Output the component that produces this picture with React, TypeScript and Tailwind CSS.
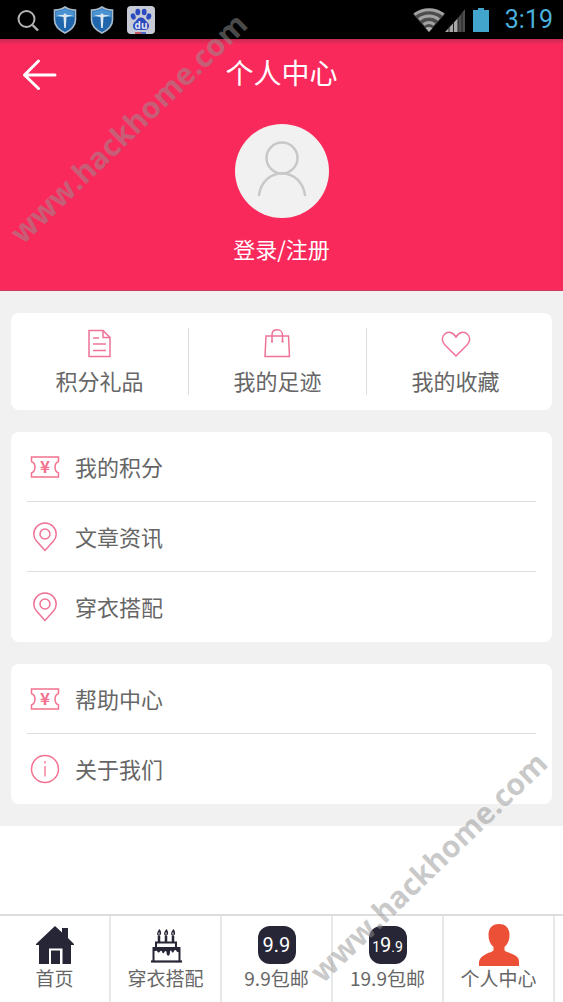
import type { ReactNode } from "react";

function SearchIcon() {
  return (
    <svg className="h-6 w-6" viewBox="0 0 24 24" fill="none" stroke="#b4b4b4" strokeWidth="2">
      <circle cx="10.5" cy="11" r="8" />
      <path d="M16.5 17l5.5 5.5" strokeWidth="2.4" />
    </svg>
  );
}

function ShieldIcon() {
  return (
    <svg className="h-7 w-6" viewBox="0 0 24 28">
      <path d="M12 1c3 2.2 6.500 3 10.500 3v10c0 6-4.500 10-10.500 13C6 24 1.500 20 1.500 14V4C5.500 4 9 3.200 12 1z" fill="#1f66ad" stroke="#a9bccb" strokeWidth="1.600" />
      <path d="M12 2.800C9.500 4.400 6 5.300 3 5.400V11h18V5.400c-3-.1-6.500-1-9-2.600z" fill="#4a93d2" />
      <path d="M4 9.500c2.500-.4 5-.6 6.500-.8L12 7l1.500 1.700c1.500.2 4 .4 6.500.8l-6.500 1.500L12.800 22h-1.600L10.500 11z" fill="#dbe6ee" />
    </svg>
  );
}

function PawIcon() {
  return (
    <svg className="h-7 w-7" viewBox="0 0 28 28">
      <rect width="28" height="28" rx="4" fill="#c6cbd6" />
      <g fill="#2c49c0">
        <ellipse cx="6.200" cy="10.500" rx="2.400" ry="3.200" transform="rotate(-18 6.200 10.500)" />
        <ellipse cx="10.800" cy="6" rx="2.400" ry="3.300" />
        <ellipse cx="17.200" cy="6" rx="2.400" ry="3.300" />
        <ellipse cx="21.800" cy="10.500" rx="2.400" ry="3.200" transform="rotate(18 21.800 10.500)" />
        <path d="M14 11.500c3 0 4 2.500 5.500 4s3 2.500 2.500 5-2 3.500-4 3.500H10c-2 0-3.700-1-4-3.500s1-3.500 2.500-5 2.500-4 5.500-4z" />
      </g>
      <path d="M8 27h6" stroke="#c2353c" strokeWidth="1.500" />
      <path d="M14 27h5" stroke="#2c49c0" strokeWidth="1.500" />
      <text x="14" y="22.500" textAnchor="middle" fontFamily="Open Sans, sans-serif" fontWeight="700" fontSize="10" fill="#e3e6ef">
        du
      </text>
    </svg>
  );
}

function WifiIcon() {
  return (
    <svg className="h-6 w-8" viewBox="0 0 32 24">
      <path d="M0 6C9-1 23-1 32 6L16 24z" fill="#4c4c4c" />
      <g fill="none" stroke="#a2a2a2" strokeWidth="3">
        <path d="M1.500 6.500C10 0 22 0 30.500 6.500" />
        <path d="M6 11.500c6-4.600 14-4.600 20 0" />
        <path d="M10.500 16.500c3.500-2.600 7.500-2.600 11 0" />
      </g>
      <path d="M12.500 20c2-1.500 5-1.500 7 0L16 24z" fill="#b0b0b0" />
    </svg>
  );
}

function SignalIcon() {
  return (
    <svg className="h-6 w-5" viewBox="0 0 20 24">
      <path d="M0 24L13 10v14z" fill="#a6a6a6" />
      <path d="M13 10l7-9v23h-7z" fill="#4d4d4d" />
      <path d="M4 18v6M8.500 14v10M13 9v15M17 4v20" stroke="#222" strokeWidth="1" />
    </svg>
  );
}

function BatteryIcon() {
  return (
    <svg className="h-6 w-4" viewBox="0 0 16 24">
      <path d="M5 0h6v2h5v22H0V2h5z" fill="#42a5cc" />
    </svg>
  );
}

function DocumentIcon() {
  return (
    <svg className="h-[30px] w-[30px]" viewBox="0 0 30 30" fill="none" stroke="#ee7396" strokeWidth="1.500">
      <path d="M4 2.500h14l7 7v19H4z" />
      <path d="M18 2.500v7h7M8 10h6M8 16h13M8 22.500h13" />
    </svg>
  );
}

function BagIcon() {
  return (
    <svg className="h-[30px] w-[30px]" viewBox="0 0 30 30" fill="none" stroke="#ee7396" strokeWidth="1.500">
      <path d="M3 8h22.500l1 20.500H2z" />
      <path d="M9 13.500V7c0-3 2-5.200 5.200-5.200S19.500 4 19.500 7v6.500" />
      <path d="M8 13.500h2M18.500 13.500h2" strokeWidth="2" />
    </svg>
  );
}

function HeartIcon() {
  return (
    <svg className="h-[30px] w-[30px]" viewBox="0 0 30 30" fill="none" stroke="#ee7396" strokeWidth="1.500">
      <path d="M15 28L4 17C.5 13.500.5 9 3.500 6.200 7 3 12 4 15 9c3-5 8-6 11.500-2.800 3 2.800 3 7.300-.5 10.800z" />
    </svg>
  );
}

function TicketIcon() {
  return (
    <svg className="h-[30px] w-[30px]" viewBox="0 0 30 30" fill="none" stroke="#f4718f" strokeWidth="1.500">
      <path d="M1.500 5h27v4.500c-2.500 1-3.500 3.300-3.500 5.700s1 4.700 3.500 5.700V25h-27v-4.100c2.500-1 3.500-3.300 3.500-5.700s-1-4.700-3.500-5.700z" />
      <text x="15" y="21" textAnchor="middle" fontFamily="Noto Sans CJK SC, sans-serif" fontWeight="700" fontSize="17" fill="#f4718f" stroke="none">
        ¥
      </text>
    </svg>
  );
}

function PinIcon() {
  return (
    <svg className="h-[30px] w-[30px]" viewBox="0 0 30 30" fill="none" stroke="#ee7396" strokeWidth="1.500">
      <path d="M15 28.500L6.500 19C4.800 17 3.800 14.800 3.800 12.200a11.200 11.200 0 0122.400 0c0 2.600-1 4.800-2.700 6.800z" />
      <circle cx="15" cy="12" r="5" />
    </svg>
  );
}

function InfoIcon() {
  return (
    <svg className="h-[30px] w-[30px]" viewBox="0 0 30 30" fill="none" stroke="#f4718f" strokeWidth="1.500">
      <circle cx="15" cy="15" r="13.500" />
      <path d="M15 12v10.500M15 7v2.500" strokeWidth="1.300" />
    </svg>
  );
}

function HomeIcon() {
  return (
    <svg className="h-10 w-10" viewBox="0 0 40 40" fill="#272636">
      <path d="M20 1l7 6.500V3h6v10l6 6v1h-3v19h-8.500V23.500H14V39H4V20H1v-1z" />
      <path d="M16 39V25.500h9V39z" />
    </svg>
  );
}

function CakeIcon() {
  return (
    <svg className="h-10 w-10" viewBox="0 0 40 40" fill="none" stroke="#272636" strokeWidth="2">
      <path d="M13 11v6M20 11v6M27 11v6" strokeWidth="2.500" />
      <path d="M10 23v-5.500h20V23" />
      <path d="M7.500 36V23h26v13" />
      <path d="M5 36.500h31" strokeWidth="2.200" />
      <path d="M7.500 23h26v3c-1 2-2.500 1-3 0-.8-1.500-2-1-2.500 0-.5 2-2 2-2.500 0-.5-1-1.500-.5-1.500 1 0 5-3.500 5-3.500 0-.5-1.500-1.500-1.500-2 0-1 2-2 1.500-2.500-.5-.5-1-1.500-1-2 0-1 2-2 1-3-.5-1-1-2.500 1-3.500-.5z" fill="#272636" stroke="none" />
      <g fill="#272636" stroke="none">
        <path d="M13.500 4c2 2.500 2.500 6-.5 7-3-1-2-4 .5-7zM20.500 4c2 2.500 2.500 6-.5 7-3-1-2-4 .5-7zM27.500 4c2 2.500 2.500 6-.5 7-3-1-2-4 .5-7z" />
      </g>
      <path d="M13 7.500v2M20 7.500v2M27 7.500v2" stroke="#fff" strokeWidth="1" />
    </svg>
  );
}

function UserIcon() {
  return (
    <svg className="h-11 w-11" viewBox="0 0 44 44" fill="#ec5037">
      <path d="M22 1c7 0 10.500 4.500 10.500 11 0 5-1.500 9-5 12v3c0 1.500 3 2 6.500 3.500 5 2 8 4 8 8V43H2v-3c0-4.500 3-7 8-9.500 3.500-1.500 6.500-2 6.500-3.500v-3c-3.500-3-5-7-5-12C11.500 5.500 15 1 22 1z" />
    </svg>
  );
}

function PriceBadge({ children }: { children: ReactNode }) {
  return (
    <span className="flex h-[38px] w-[38px] items-center justify-center rounded-[12px] bg-[#272636] font-[Roboto] text-white">
      {children}
    </span>
  );
}

const shortcuts = [
  { label: "积分礼品", icon: <DocumentIcon /> },
  { label: "我的足迹", icon: <BagIcon /> },
  { label: "我的收藏", icon: <HeartIcon /> },
];

const menuGroups = [
  [
    { label: "我的积分", icon: <TicketIcon /> },
    { label: "文章资讯", icon: <PinIcon /> },
    { label: "穿衣搭配", icon: <PinIcon /> },
  ],
  [
    { label: "帮助中心", icon: <TicketIcon /> },
    { label: "关于我们", icon: <InfoIcon /> },
  ],
];

const tabs = [
  { label: "首页", icon: <HomeIcon /> },
  { label: "穿衣搭配", icon: <CakeIcon /> },
  {
    label: "9.9包邮",
    icon: (
      <PriceBadge>
        <span className="text-xl">9.9</span>
      </PriceBadge>
    ),
  },
  {
    label: "19.9包邮",
    icon: (
      <PriceBadge>
        <span className="flex items-baseline text-sm">
          1<span className="text-xl">9</span>.9
        </span>
      </PriceBadge>
    ),
  },
  { label: "个人中心", icon: <UserIcon /> },
];

function StatusBar() {
  return (
    <div className="flex h-[39px] items-center justify-between bg-black pr-[10px] pl-4">
      <div className="flex items-center gap-[13px]">
        <SearchIcon />
        <ShieldIcon />
        <ShieldIcon />
        <PawIcon />
      </div>
      <div className="flex items-center">
        <WifiIcon />
        <SignalIcon />
        <span className="mr-4 ml-2">
          <BatteryIcon />
        </span>
        <span className="font-[Roboto] text-[25px] leading-none text-[#4ab0dc]">3:19</span>
      </div>
    </div>
  );
}

function ProfileHeader() {
  return (
    <header className="flex flex-col items-center border-b border-[#c93a60] bg-[#fa295c] bg-linear-to-b from-[#c92a50] to-[#fa295c] to-[6px] pb-7 text-white">
      <div className="grid h-[68px] w-full grid-cols-[1fr_auto_1fr] items-center px-[22px]">
        <button type="button" aria-label="返回" className="justify-self-start">
          <svg className="h-9 w-9" viewBox="0 0 36 36" fill="none" stroke="#fff" strokeWidth="3" strokeLinecap="round" strokeLinejoin="round">
            <path d="M16.500 6L2.500 20l14 13.500M2.500 20H33" />
          </svg>
        </button>
        <h1 className="pb-0.5 text-[28px] leading-8">个人中心</h1>
      </div>
      <a href="#login" className="mt-[17px] flex flex-col items-center gap-4">
        <span className="flex h-[94px] w-[94px] items-center justify-center rounded-full bg-[#f1f1f1]">
          <svg className="h-[60px] w-[60px]" viewBox="0 0 60 60" fill="none" stroke="#c8c8c8" strokeWidth="2.500" strokeLinecap="round">
            <circle cx="30" cy="17" r="15.500" />
            <path d="M7 54c2-13 11-21.500 23-21.500S51 41 53 54" />
          </svg>
        </span>
        <span className="text-[22px] leading-7">登录/注册</span>
      </a>
    </header>
  );
}

function Watermark({ className }: { className: string }) {
  return (
    <div aria-hidden="true" className={`pointer-events-none absolute flex h-64 w-64 items-center justify-center ${className}`}>
      <span className="-rotate-44 font-['Open_Sans'] text-[30px] leading-none font-bold whitespace-nowrap text-[#949494]/50">
        www.hackhome.com
      </span>
    </div>
  );
}

export default function App() {
  return (
    <div className="relative flex min-h-screen flex-col overflow-hidden bg-white font-['Noto_Sans_CJK_SC',sans-serif] text-[#666]">
      <StatusBar />
      <ProfileHeader />

      <main className="flex flex-col gap-[22px] bg-[#f1f1f1] px-[11px] py-[22px]">
        <section className="flex rounded-lg bg-white py-[15px] pr-2">
          {shortcuts.map((item) => (
            <a
              key={item.label}
              href="#shortcut"
              className="flex flex-1 flex-col items-center gap-2 border-r border-[#ddd] last:border-r-0"
            >
              {item.icon}
              <span className="text-[22px] leading-[29px]">{item.label}</span>
            </a>
          ))}
        </section>

        {menuGroups.map((group, i) => (
          <ul key={i} className="rounded-lg bg-white px-4">
            {group.map((item) => (
              <li key={item.label} className="h-[70px] border-b border-[#ddd] last:border-b-0">
                <a href="#menu" className="flex h-full items-center gap-3">
                  <span className="flex w-9 justify-center">{item.icon}</span>
                  <span className="pb-0.5 text-[22px] leading-8">{item.label}</span>
                </a>
              </li>
            ))}
          </ul>
        ))}
      </main>

      {/* Bottom tabs */}
      <nav className="mt-auto flex h-[88px] border-t-2 border-[#ddd] pr-2">
        {tabs.map((tab) => (
          <a key={tab.label} href="#tab" className="flex flex-1 flex-col items-center border-r-2 border-[#e8e8e8] pt-2">
            <span className="flex h-[42px] items-center">{tab.icon}</span>
            <span className="text-[19px] leading-6 whitespace-nowrap">{tab.label}</span>
          </a>
        ))}
      </nav>

      <Watermark className="top-0 left-0" />
      <Watermark className="right-[7px] bottom-[7px]" />
    </div>
  );
}
